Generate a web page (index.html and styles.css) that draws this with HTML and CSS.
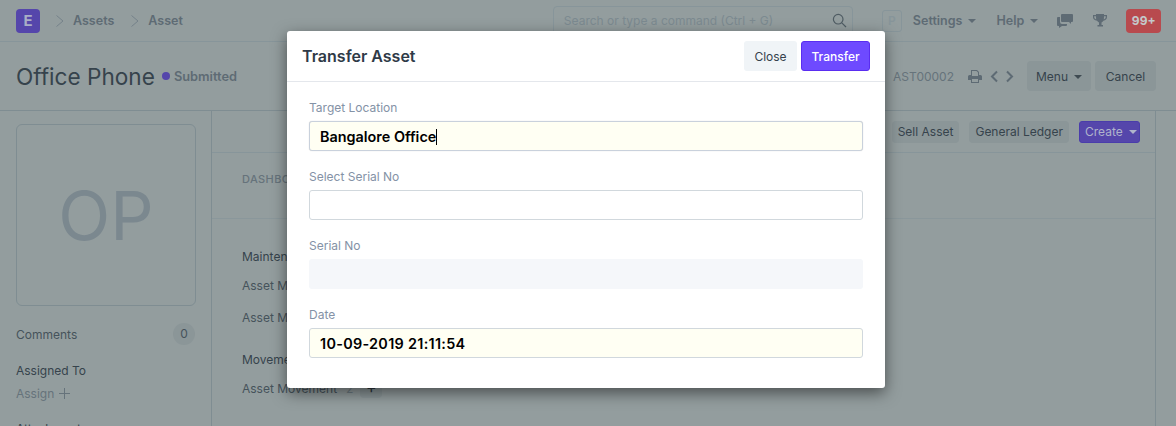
FILE: index.html

```html
<!DOCTYPE html>
<html>
<head>
  <title>Transfer Asset</title>
  <link rel="stylesheet" href="styles.css">
</head>
<body>
  <header class="navbar">
    <div class="logo">E</div>
    <svg class="crumb-sep" width="10" height="14" viewBox="0 0 10 14"><path d="M1.500 1.500 8 7l-6.500 5.500"/></svg>
    <span class="crumb">Assets</span>
    <svg class="crumb-sep" width="10" height="14" viewBox="0 0 10 14"><path d="M1.500 1.500 8 7l-6.500 5.500"/></svg>
    <span class="crumb">Asset</span>
    <div class="search">
      <span>Search or type a command (Ctrl + G)</span>
      <svg width="15" height="15" viewBox="0 0 15 15"><circle cx="6.200" cy="6.200" r="4.800"/><path d="m9.800 9.800 4.200 4.200"/></svg>
    </div>
    <div class="avatar-small">P</div>
    <span class="nav-link">Settings<i class="caret"></i></span>
    <span class="nav-link">Help<i class="caret"></i></span>
    <svg class="nav-icon" width="16" height="14" viewBox="0 0 16 14"><path d="M5 0h10a1 1 0 0 1 1 1v6a1 1 0 0 1-1 1h-1v2l-2-2H5a1 1 0 0 1-1-1V1a1 1 0 0 1 1-1z"/><path d="M3 3v5a2 2 0 0 0 2 2h5v1a1 1 0 0 1-1 1H5l-3 2v-2H1a1 1 0 0 1-1-1V4a1 1 0 0 1 1-1z"/></svg>
    <svg class="nav-icon trophy" width="14" height="14" viewBox="0 0 14 14"><path d="M3 0h8v1h3v2c0 2-1.500 3.500-3.600 3.800-.5.9-1.100 1.400-1.900 1.700V11h1.500v1.500H4.500V11H6V8.500c-.8-.3-1.400-.8-1.900-1.700C1.500 6.500 0 5 0 3V1h3zM1.200 2.200V3c0 1.200.8 2 2 2.400-.1-1-.2-2-.2-3.200zm11.600 0H11c0 1.200-.1 2.200-.2 3.200 1.200-.4 2-1.200 2-2.400z"/></svg>
    <div class="notif">99+</div>
  </header>

  <section class="title-row">
    <h1>Office Phone</h1>
    <span class="dot"></span>
    <span class="status">Submitted</span>
    <span class="doc-id">AST00002</span>
    <svg class="doc-icon" width="14" height="13" viewBox="0 0 14 13"><path d="M3 0h6l2 2v3h1.500A1.500 1.500 0 0 1 14 6.500V10h-3v3H3v-3H0V6.500A1.500 1.500 0 0 1 1.500 5H3zm1 1v5h6V2.500L8.500 1zm0 8v3h6V9z" fill-rule="evenodd"/></svg>
    <svg class="pager" width="10" height="13" viewBox="0 0 10 13"><path d="M8 1.500 3 6.500l5 5"/></svg>
    <svg class="pager" width="10" height="13" viewBox="0 0 10 13"><path d="m2 1.500 5 5-5 5"/></svg>
    <button class="btn-grey menu">Menu<i class="caret dark"></i></button>
    <button class="btn-grey cancel">Cancel</button>
  </section>

  <div class="layout">
    <aside class="sidebar">
      <div class="image-box">OP</div>
      <div class="comments"><span>Comments</span><span class="count">0</span></div>
      <div class="assigned">Assigned To</div>
      <div class="assign">Assign<svg width="11" height="11" viewBox="0 0 11 11"><path d="M5.500 0v11M0 5.500h11"/></svg></div>
      <div class="attach">Attachments</div>
    </aside>
    <main class="main">
      <div class="toolbar">
        <span class="btn-small">Sell Asset</span>
        <span class="btn-small">General Ledger</span>
        <span class="btn-create">Create<i class="caret light"></i></span>
      </div>
      <div class="tabs">DASHBOARD</div>
      <div class="links">
        <div class="link-head">Maintenance</div>
        <div class="link-row">Asset Maintenance</div>
        <div class="link-row">Asset Maint.</div>
        <div class="link-head second">Movement</div>
        <div class="link-row last">Asset Movement<span class="link-count">2</span><span class="link-add">+</span></div>
      </div>
    </main>
  </div>

  <div class="modal">
    <div class="modal-head">
      <h2>Transfer Asset</h2>
      <button class="btn-close">Close</button>
      <button class="btn-primary">Transfer</button>
    </div>
    <div class="modal-body">
      <div class="field">
        <label>Target Location</label>
        <div class="input filled focus">Bangalore Office<span class="cursor"></span></div>
      </div>
      <div class="field">
        <label>Select Serial No</label>
        <div class="input"></div>
      </div>
      <div class="field">
        <label>Serial No</label>
        <div class="input readonly"></div>
      </div>
      <div class="field">
        <label>Date</label>
        <div class="input filled date">10-09-2019 21:11:54</div>
      </div>
    </div>
  </div>
</body>
</html>
```

FILE: styles.css

```css
* { box-sizing: border-box; }
html, body {
  margin: 0;
  height: 426px;
  overflow: hidden;
}
body {
  position: relative;
  font-family: Inter, 'Noto Sans', sans-serif;
  font-size: 12px;
  background: #939d9e;
  color: #3f4b52;
  white-space: nowrap;
}

/* navbar */
.navbar {
  display: flex;
  align-items: center;
  height: 42px;
  padding: 0 15px 0 16px;
  border-bottom: 1px solid #87959a;
}
.logo {
  width: 24px;
  height: 24px;
  flex: none;
  border-radius: 4px;
  background: #5546ab;
  color: #a9aec6;
  font-size: 15px;
  font-weight: 700;
  display: flex;
  align-items: center;
  justify-content: center;
}
.crumb-sep {
  flex: none;
  margin: 0 8px 0 15px;
  fill: none;
  stroke: #75828a;
  stroke-width: 1;
}
.crumb {
  font-size: 12.500px;
  font-weight: 600;
  color: #5e6b74;
}
.crumb + .crumb-sep { margin-left: 16px; }
.search {
  margin-left: 370px;
  width: 300px;
  height: 30px;
  flex: none;
  border: 1px solid #87959a;
  border-radius: 4px;
  display: flex;
  align-items: center;
  justify-content: space-between;
  padding: 0 5px 0 10px;
  color: #7c8a90;
  font-size: 12px;
}
.search svg {
  fill: none;
  stroke: #4f5c63;
  stroke-width: 1.200;
}
.avatar-small {
  width: 20px;
  height: 22px;
  flex: none;
  margin-left: 29px;
  border: 1px solid #87959a;
  border-radius: 3px;
  color: #87959a;
  font-size: 12px;
  font-weight: 600;
  display: flex;
  align-items: center;
  justify-content: center;
}
.nav-link {
  margin-left: 11px;
  font-size: 12.500px;
  font-weight: 600;
  color: #5e6b74;
}
.nav-link + .nav-link { margin-left: 20px; }
.caret {
  display: inline-block;
  width: 0;
  height: 0;
  margin-left: 6px;
  vertical-align: 2px;
  border-left: 4px solid transparent;
  border-right: 4px solid transparent;
  border-top: 4px solid #5e6b74;
}
.caret.dark { border-top-color: #3f4b52; }
.caret.light { border-top-color: #b0b4cb; }
.nav-icon {
  flex: none;
  margin-left: 19px;
  fill: #5e6b74;
}
.nav-icon.trophy { margin-left: 20px; }
.notif {
  flex: none;
  margin-left: 19px;
  width: 35px;
  height: 24px;
  border-radius: 4px;
  background: #b84a4e;
  color: #c4c9cb;
  font-weight: 700;
  display: flex;
  align-items: center;
  justify-content: center;
}

/* page title */
.title-row {
  display: flex;
  align-items: center;
  height: 69px;
  padding: 0 20px 0 16px;
  border-bottom: 1px solid #7f8d92;
}
h1 {
  margin: 0;
  font-size: 22.600px;
  font-weight: 400;
  color: #36434c;
}
.dot {
  width: 8px;
  height: 8px;
  margin-left: 7px;
  border-radius: 50%;
  background: #5546ab;
}
.status {
  margin-left: 4px;
  font-size: 12.800px;
  font-weight: 600;
  color: #5e6b74;
}
.doc-id {
  margin-left: auto;
  color: #66737b;
}
.doc-icon {
  flex: none;
  margin-left: 14px;
  fill: #5e6b74;
}
.pager {
  flex: none;
  margin-left: 7px;
  fill: none;
  stroke: #5e6b74;
  stroke-width: 2;
}
.pager + .pager { margin-left: 6px; }
.btn-grey {
  height: 30px;
  margin-left: 4px;
  padding: 0;
  border: 0;
  border-radius: 4px;
  background: #8b9698;
  color: #36434c;
  font-family: inherit;
  font-size: 12px;
}
.btn-grey.menu {
  width: 64px;
  margin-left: 12px;
}
.btn-grey.cancel { width: 61px; }

/* content under the modal */
.layout {
  display: flex;
  height: 316px;
}
.sidebar {
  width: 212px;
  padding: 13px 16px 0;
  border-right: 1px solid #7f8d92;
}
.image-box {
  width: 180px;
  height: 182px;
  border: 1px solid #7f8d92;
  border-radius: 6px;
  color: #7b888f;
  font-size: 68px;
  display: flex;
  align-items: center;
  justify-content: center;
}
.comments {
  display: flex;
  align-items: center;
  justify-content: space-between;
  margin-top: 17px;
  color: #46535b;
}
.count {
  width: 22px;
  height: 22px;
  border-radius: 50%;
  background: #8b9698;
  text-align: center;
  line-height: 22px;
}
.assigned {
  margin-top: 18px;
  color: #36434c;
}
.assign {
  display: flex;
  align-items: center;
  gap: 5px;
  margin-top: 8px;
  color: #66737b;
}
.assign svg {
  stroke: #66737b;
  fill: none;
}
.attach {
  margin-top: 20px;
  color: #36434c;
}
.main {
  width: 944px;
  border-right: 1px solid #7f8d92;
}
.toolbar {
  display: flex;
  align-items: center;
  justify-content: flex-end;
  gap: 10px;
  height: 42px;
  padding-right: 15px;
  border-bottom: 1px solid #87959a;
}
.btn-small {
  height: 22px;
  padding: 0 6px;
  border-radius: 4px;
  background: #8b9698;
  color: #36434c;
  line-height: 22px;
}
.btn-create {
  width: 61px;
  height: 22px;
  padding: 0 5px;
  border: 1px solid #4a3dab;
  border-radius: 3px;
  background: #5546ab;
  color: #b0b4cb;
  line-height: 20px;
}
.tabs {
  height: 66px;
  padding: 19px 0 0 30px;
  border-bottom: 1px solid #8a979b;
  color: #66737b;
  font-size: 11px;
  font-weight: 500;
  letter-spacing: 0.4px;
}
.links { padding: 30px 0 0 30px; }
.link-head {
  color: #36434c;
  line-height: 15px;
}
.link-head.second { margin-top: 27px; }
.link-row {
  margin-top: 14px;
  color: #46535b;
  line-height: 15px;
}
.link-row + .link-row { margin-top: 17px; }
.link-row.last { margin-top: 9px; }
.link-count {
  margin-left: 9px;
  color: #6f7c83;
}
.link-add {
  display: inline-block;
  width: 22px;
  height: 22px;
  margin-left: 7px;
  border-radius: 4px;
  background: #8b9698;
  color: #2c363d;
  font-size: 16px;
  line-height: 22px;
  text-align: center;
}

/* modal */
.modal {
  position: absolute;
  left: 287px;
  top: 31px;
  width: 598px;
  height: 357px;
  background: #fff;
  border-radius: 3px;
  box-shadow: 0 5px 15px rgba(0, 0, 0, 0.5);
}
.modal-head {
  display: flex;
  align-items: center;
  height: 51px;
  padding: 0 15px;
  border-bottom: 1px solid #e4e7ec;
}
h2 {
  margin: 0 auto 0 0;
  font-size: 16px;
  font-weight: 600;
  color: #2f3a47;
}
.btn-close, .btn-primary {
  height: 30px;
  border-radius: 3px;
  font-family: inherit;
  font-size: 12px;
}
.btn-close {
  width: 53px;
  border: 0;
  background: #f0f4f7;
  color: #36414c;
}
.btn-primary {
  width: 69px;
  margin-left: 4px;
  border: 1px solid #5a2df0;
  background: #6e4aff;
  color: #fff;
  font-weight: 500;
}
.modal-body { padding: 16px 22px 0; }
.field { margin-bottom: 16px; }
.field label {
  display: block;
  height: 23px;
  color: #8492a6;
  font-size: 12px;
  line-height: 20px;
}
.input {
  height: 30px;
  border: 1px solid #d1d8dd;
  border-radius: 3px;
  background: #fff;
  padding: 0 10px;
  color: #000;
  font-size: 14.400px;
  font-weight: 600;
  line-height: 30px;
}
.input.filled { background: #fffff3; }
.input.date { letter-spacing: 0.3px; }
.input.focus {
  border-color: #c9d1dc;
  box-shadow: 0 0 1px rgba(0, 0, 0, 0.2);
}
.input.readonly {
  border: 0;
  background: #f5f7fa;
}
.cursor {
  display: inline-block;
  width: 1px;
  height: 16px;
  background: #000;
  vertical-align: -3px;
}
```
